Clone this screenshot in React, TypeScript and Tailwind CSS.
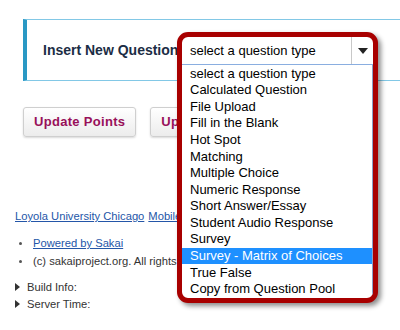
const questionTypes = [
  'select a question type',
  'Calculated Question',
  'File Upload',
  'Fill in the Blank',
  'Hot Spot',
  'Matching',
  'Multiple Choice',
  'Numeric Response',
  'Short Answer/Essay',
  'Student Audio Response',
  'Survey',
  'Survey - Matrix of Choices',
  'True False',
  'Copy from Question Pool',
];

const SELECTED = 'Survey - Matrix of Choices';

const Button = ({ label }: { label: string }) => (
  <button className="h-[30px] shrink-0 rounded-[3px] border border-[#cfcfcf] bg-gradient-to-b from-white to-[#ececec] px-[10px] text-[13px] font-bold tracking-[0.3px] text-[#98105a] shadow-[0_1px_2px_rgba(0,0,0,0.15)]">
    {label}
  </button>
);

export default function App() {
  return (
    <div className="relative h-[330px] w-[400px] overflow-hidden bg-white font-['Liberation_Sans',Arial,sans-serif]">
      {/* Add question panel */}
      <div className="ml-[23px] mt-[19px] flex h-[62px] items-center border-y border-l-4 border-y-[#82c8e6] border-l-[#2a98c4] pl-[16px]">
        <span className="whitespace-nowrap text-[14px] font-bold text-[#1c2d45]">Insert New Question</span>
      </div>

      {/* Buttons */}
      <div className="ml-[23px] mt-[26px] flex gap-[14px]">
        <Button label="Update Points" />
        <Button label="Update Order" />
      </div>

      {/* Footer */}
      <div className="ml-[15px] mt-[72px] text-[11.2px] text-[#333]">
        <div className="flex gap-[4px] leading-[14px]">
          <a className="text-[#2456a8] underline">Loyola University Chicago</a>
          <a className="whitespace-nowrap text-[#2456a8] underline">Mobile View</a>
        </div>
        <ul className="mt-[13px] flex flex-col gap-[4px] leading-[14px]">
          <li className="flex items-center">
            <span className="ml-[4px] mr-[11px] h-[3px] w-[3px] rounded-full bg-[#555]" />
            <a className="text-[#2456a8] underline">Powered by Sakai</a>
          </li>
          <li className="flex items-center">
            <span className="ml-[4px] mr-[11px] h-[3px] w-[3px] rounded-full bg-[#555]" />
            <span className="whitespace-nowrap">(c) sakaiproject.org. All rights reserved.</span>
          </li>
        </ul>
        <div className="mt-[12px] flex flex-col gap-[3px] leading-[14px]">
          <div className="flex items-center gap-[7px]">
            <span className="h-0 w-0 border-y-[4px] border-l-[5px] border-y-transparent border-l-[#333]" />
            <span>Build Info:</span>
          </div>
          <div className="flex items-center gap-[7px]">
            <span className="h-0 w-0 border-y-[4px] border-l-[5px] border-y-transparent border-l-[#333]" />
            <span>Server Time:</span>
          </div>
        </div>
      </div>

      {/* Open dropdown, highlighted in red */}
      <div className="absolute left-[177px] top-[32px] flex h-[271px] w-[201px] flex-col overflow-hidden rounded-[11px] border-[5px] border-[#a80000] bg-white shadow-[3px_3px_5px_rgba(0,0,0,0.45)]">
        <div className="flex h-[28px] shrink-0 items-center border-b border-[#8aaee0]">
          <span className="flex-1 pl-[8px] text-[13px] text-black">select a question type</span>
          <div className="flex h-[27px] w-[22px] items-center justify-center border-l border-[#c8c8c8]">
            <span className="h-0 w-0 border-x-[5px] border-t-[6px] border-x-transparent border-t-[#222]" />
          </div>
        </div>
        <div className="flex-1 border-r border-[#8aa0c8]">
          {questionTypes.map((t) => (
            <div
              key={t}
              className={
                t === SELECTED
                  ? 'flex h-[16.6px] items-center bg-[#1e90ff] pl-[8px] text-[13px] text-white'
                  : 'flex h-[16.6px] items-center pl-[8px] text-[13px] text-black'
              }
            >
              {t}
            </div>
          ))}
        </div>
      </div>
    </div>
  );
}
